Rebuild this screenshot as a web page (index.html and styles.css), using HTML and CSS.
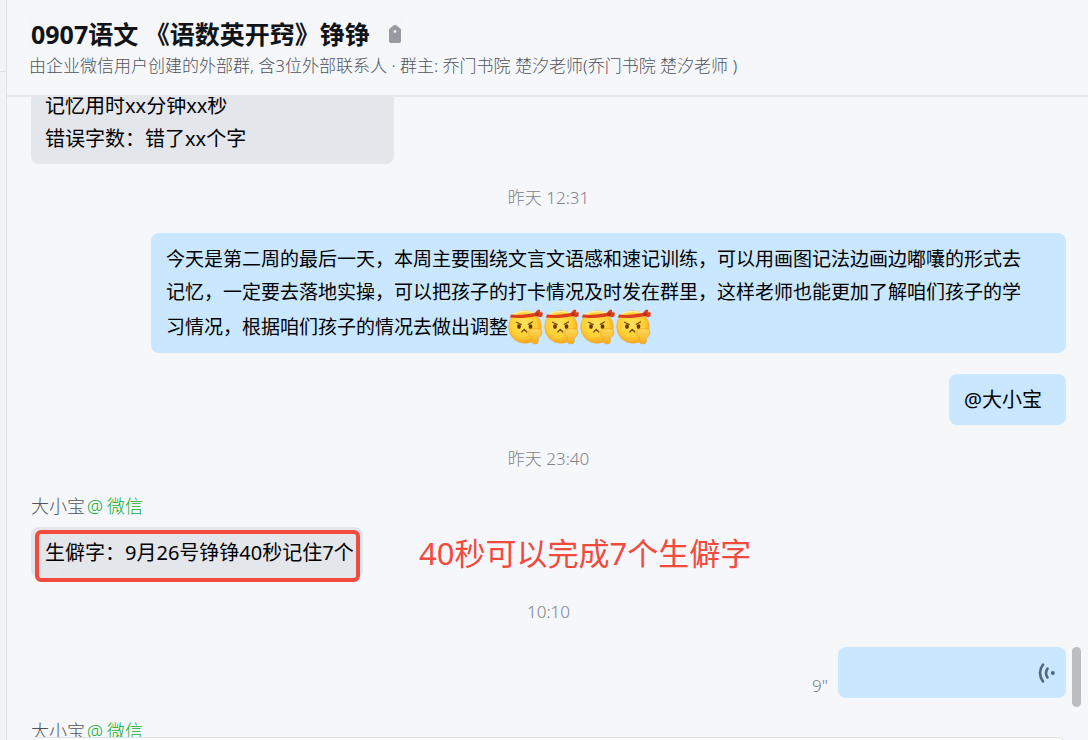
FILE: index.html
```
<!DOCTYPE html>
<html lang="zh-CN">
<head>
    <meta charset="utf-8" />
    <meta name="viewport" content="width=device-width, initial-scale=1.0" />
    <title>0907语文 《语数英开窍》铮铮</title>
    <link rel="stylesheet" href="styles.css">
</head>
<body>
    <!-- shared emoji shape -->
    <svg class="defs" aria-hidden="true">
        <defs>
            <radialGradient id="face" cx="45%" cy="40%" r="60%">
                <stop offset="0" stop-color="#ffe45c" />
                <stop offset="0.65" stop-color="#ffd032" />
                <stop offset="1" stop-color="#f5a623" />
            </radialGradient>
            <linearGradient id="fist" x1="0" y1="0" x2="0" y2="1">
                <stop offset="0" stop-color="#ffd95a" />
                <stop offset="1" stop-color="#f7ae1c" />
            </linearGradient>
            <symbol id="emoji-fight" viewBox="0 0 36 36">
                <circle cx="17" cy="18" r="16.3" fill="url(#face)" stroke="#eea52a" stroke-width="0.6" />
                <path d="M5.500 5.300C11 1.500 22 1.500 27 5" fill="none" stroke="#fff0a0" stroke-width="1.500" />
                <path d="M3 5.600C10 6.400 20 5.400 28 3.800l.8 3.200C20 9 10 9.600 1.800 8.600z" fill="#dc3f1c" />
                <path d="M27 3.800l3-3.300 2 .4.300 2.300 2.500.4-.4 4-2.400.6-4.200-1.400z" fill="#dc3f1c" />
                <circle cx="29" cy="5.400" r="1.800" fill="#b92d12" />
                <path d="M8.500 13.200l4.800 2.300M24.500 12.900l-4.200 2.400" stroke="#74410c" stroke-width="1.200" stroke-linecap="round" />
                <ellipse cx="11" cy="17.600" rx="1.900" ry="2.300" fill="#68350a" />
                <ellipse cx="22.500" cy="17.600" rx="1.900" ry="2.300" fill="#68350a" />
                <path d="M13.800 23l2.500-2.700 2.500 2.700" fill="none" stroke="#74410c" stroke-width="1.200" stroke-linecap="round" stroke-linejoin="round" />
                <path d="M21.500 21.500c1-1.800 3-2 4.500-1.600 2-.7 3.600-.5 4.800.2 2.600 0 3.600 1.800 3 4-.2 2.300-1.500 3.600-3.500 4.500l-.2 4.800c-.5 1.800-5.500 2-6.200.2l-.4-4.900c-2.600-1-3.500-4.600-2-7.200z" fill="url(#fist)" stroke="#e9a01f" stroke-width="0.700" />
            </symbol>
        </defs>
    </svg>

    <div class="app">
        <aside class="sidebar"><div class="sidebar-row"></div></aside>

        <main class="chat">
            <header class="chat-header">
                <div class="title-row">
                    <h1>0907语文 《语数英开窍》铮铮</h1>
                    <svg class="tag-icon" viewBox="0 0 14 20" aria-hidden="true">
                        <path d="M5.800 1.200L1.800 4.600Q1 5.300 1 6.500V17q0 2 2 2h8q2 0 2-2V6.500q0-1.200-.8-1.900L8.200 1.200q-1.200-1-2.400 0zM7 6.200a1.400 1.400 0 1 1 0 2.800 1.400 1.400 0 0 1 0-2.800z" fill="#979a9f" fill-rule="evenodd" />
                    </svg>
                </div>
                <p class="subtitle">由企业微信用户创建的外部群, 含3位外部联系人 · 群主: 乔门书院 楚汐老师(乔门书院 楚汐老师 )</p>
            </header>

            <section class="messages">
                <div class="bubble received first">记忆用时xx分钟xx秒<br>错误字数：错了xx个字</div>

                <time class="time">昨天 12:31</time>

                <div class="bubble sent long">今天是第二周的最后一天，本周主要围绕文言文语感和速记训练，可以用画图记法边画边嘟囔的形式去<br>记忆，一定要去落地实操，可以把孩子的打卡情况及时发在群里，这样老师也能更加了解咱们孩子的学<br>习情况，根据咱们孩子的情况去做出调整<svg class="emoji"><use href="#emoji-fight" /></svg><svg class="emoji"><use href="#emoji-fight" /></svg><svg class="emoji"><use href="#emoji-fight" /></svg><svg class="emoji"><use href="#emoji-fight" /></svg></div>
                <div class="bubble sent mention">@大小宝</div>

                <time class="time">昨天 23:40</time>

                <div class="sender">大小宝<span class="source"><span>@</span><span>微信</span></span></div>
                <div class="bubble received marked">
                    生僻字：9月26号铮铮40秒记住7个
                    <span class="mark-box"></span>
                    <span class="mark-text">40秒可以完成7个生僻字</span>
                </div>

                <time class="time">10:10</time>

                <div class="voice-row">
                    <span class="duration">9"</span>
                    <button class="bubble voice" aria-label="9&quot;">
                        <svg class="voice-icon" viewBox="0 0 18 20" aria-hidden="true">
                            <path d="M5 1.500Q-1 10 5 18.500M9.500 5.500Q6.500 10 9.500 14.500" fill="none" stroke="#526779" stroke-width="2.600" stroke-linecap="round" />
                            <circle cx="14.800" cy="10" r="2" fill="#526779" />
                        </svg>
                    </button>
                </div>

                <div class="sender next">大小宝<span class="source"><span>@</span><span>微信</span></span></div>
                <div class="scrollbar"></div>
            </section>

            <footer class="composer">
                <textarea aria-label="消息"></textarea>
            </footer>
        </main>
    </div>
</body>
</html>
```
FILE: styles.css
```
* {
    box-sizing: border-box;
}
body {
    margin: 0;
    background: #f5f7fb;
    color: #000;
    font-family: "Noto Sans", "Noto Sans CJK SC", sans-serif;
    font-size: 20px;
    line-height: 33px;
}
.defs {
    position: absolute;
    width: 0;
    height: 0;
}
.app {
    display: flex;
    height: 100vh;
    overflow: hidden;
}
.sidebar {
    flex: none;
    width: 7px;
    background: #f0f3f8;
    border-right: 1px solid #dddfe3;
}
.sidebar-row {
    height: 72px;
    border-bottom: 1px solid #dddfe3;
}
.chat {
    flex: 1;
    min-width: 0;
    display: flex;
    flex-direction: column;
}

/* header */
.chat-header {
    flex: none;
    height: 97px;
    padding: 14px 22px 0;
    border-bottom: 2px solid #e5e7eb;
}
.title-row {
    display: inline-flex;
    align-items: center;
    gap: 18px;
    height: 40px;
    padding: 0 2px;
    background: #f5f6f7;
}
h1 {
    margin: 0;
    font-size: 25px;
    line-height: 40px;
    font-weight: 700;
    color: #101419;
    white-space: pre;
}
.tag-icon {
    width: 14px;
    height: 20px;
}
.subtitle {
    margin: 0;
    font-size: 17px;
    line-height: 24px;
    font-weight: 300;
    color: #50545a;
    white-space: nowrap;
}

/* message list */
.messages {
    position: relative;
    flex: 1;
    min-height: 0;
    display: flex;
    flex-direction: column;
    overflow: hidden;
    padding: 0 22px 0 24px;
}
.messages > * {
    flex: none;
}
.bubble {
    padding: 9px 15px;
    border-radius: 8px;
}
.received {
    align-self: flex-start;
    padding-left: 14px;
    background: #e3e6eb;
}
.sent {
    align-self: flex-end;
    background: #c9e7ff;
}
.first {
    width: 363px;
    margin-top: -8px;
    padding-top: 0;
}
.long {
    max-width: 915px;
    width: 100%;
    padding: 10px 15px 8px;
    font-size: 19px;
}
.mention {
    margin-top: 21px;
    padding-right: 24px;
}
.emoji {
    width: 36px;
    height: 36px;
    vertical-align: -11px;
}
.time {
    align-self: center;
    margin: 24px 0 25px;
    font-size: 17px;
    line-height: 20px;
    font-weight: 300;
    color: #7f8287;
}
.sender {
    display: flex;
    gap: 2px;
    font-size: 18px;
    line-height: 24px;
    font-weight: 300;
    color: #50545a;
}
.source {
    display: flex;
    gap: 4px;
    color: #0fae30;
}
.next {
    margin-top: 21px;
}

/* red highlight and note over the message */
.marked {
    position: relative;
    margin-top: 9px;
    padding-right: 9px;
    white-space: nowrap;
}
.mark-box {
    position: absolute;
    inset: 3px 3px -4px 4px;
    border: 4px solid #f34a3e;
    border-radius: 6px;
}
.mark-text {
    position: absolute;
    left: 388px;
    top: 2px;
    font-size: 31px;
    line-height: 48px;
    color: #f34a3e;
}

/* voice message */
.voice-row {
    display: flex;
    justify-content: flex-end;
    align-items: flex-end;
    gap: 10px;
}
.duration {
    font-size: 17px;
    line-height: 24px;
    font-weight: 300;
    color: #7f8287;
}
.voice {
    display: flex;
    justify-content: flex-end;
    align-items: center;
    width: 228px;
    height: 51px;
    padding: 0 10px;
    border: 0;
    background: #c9e7ff;
    cursor: pointer;
}
.voice-icon {
    width: 18px;
    height: 20px;
}
.scrollbar {
    position: absolute;
    right: 7px;
    bottom: 30px;
    width: 9px;
    height: 60px;
    border-radius: 5px;
    background: #babdc1;
}

/* input box */
.composer {
    flex: none;
    height: 3px;
    padding: 0 22px 0 24px;
    overflow: hidden;
}
.composer textarea {
    display: block;
    width: 100%;
    height: 40px;
    border: 1px solid #dddfe3;
    border-radius: 8px;
    background: #fff;
    resize: none;
}
```
